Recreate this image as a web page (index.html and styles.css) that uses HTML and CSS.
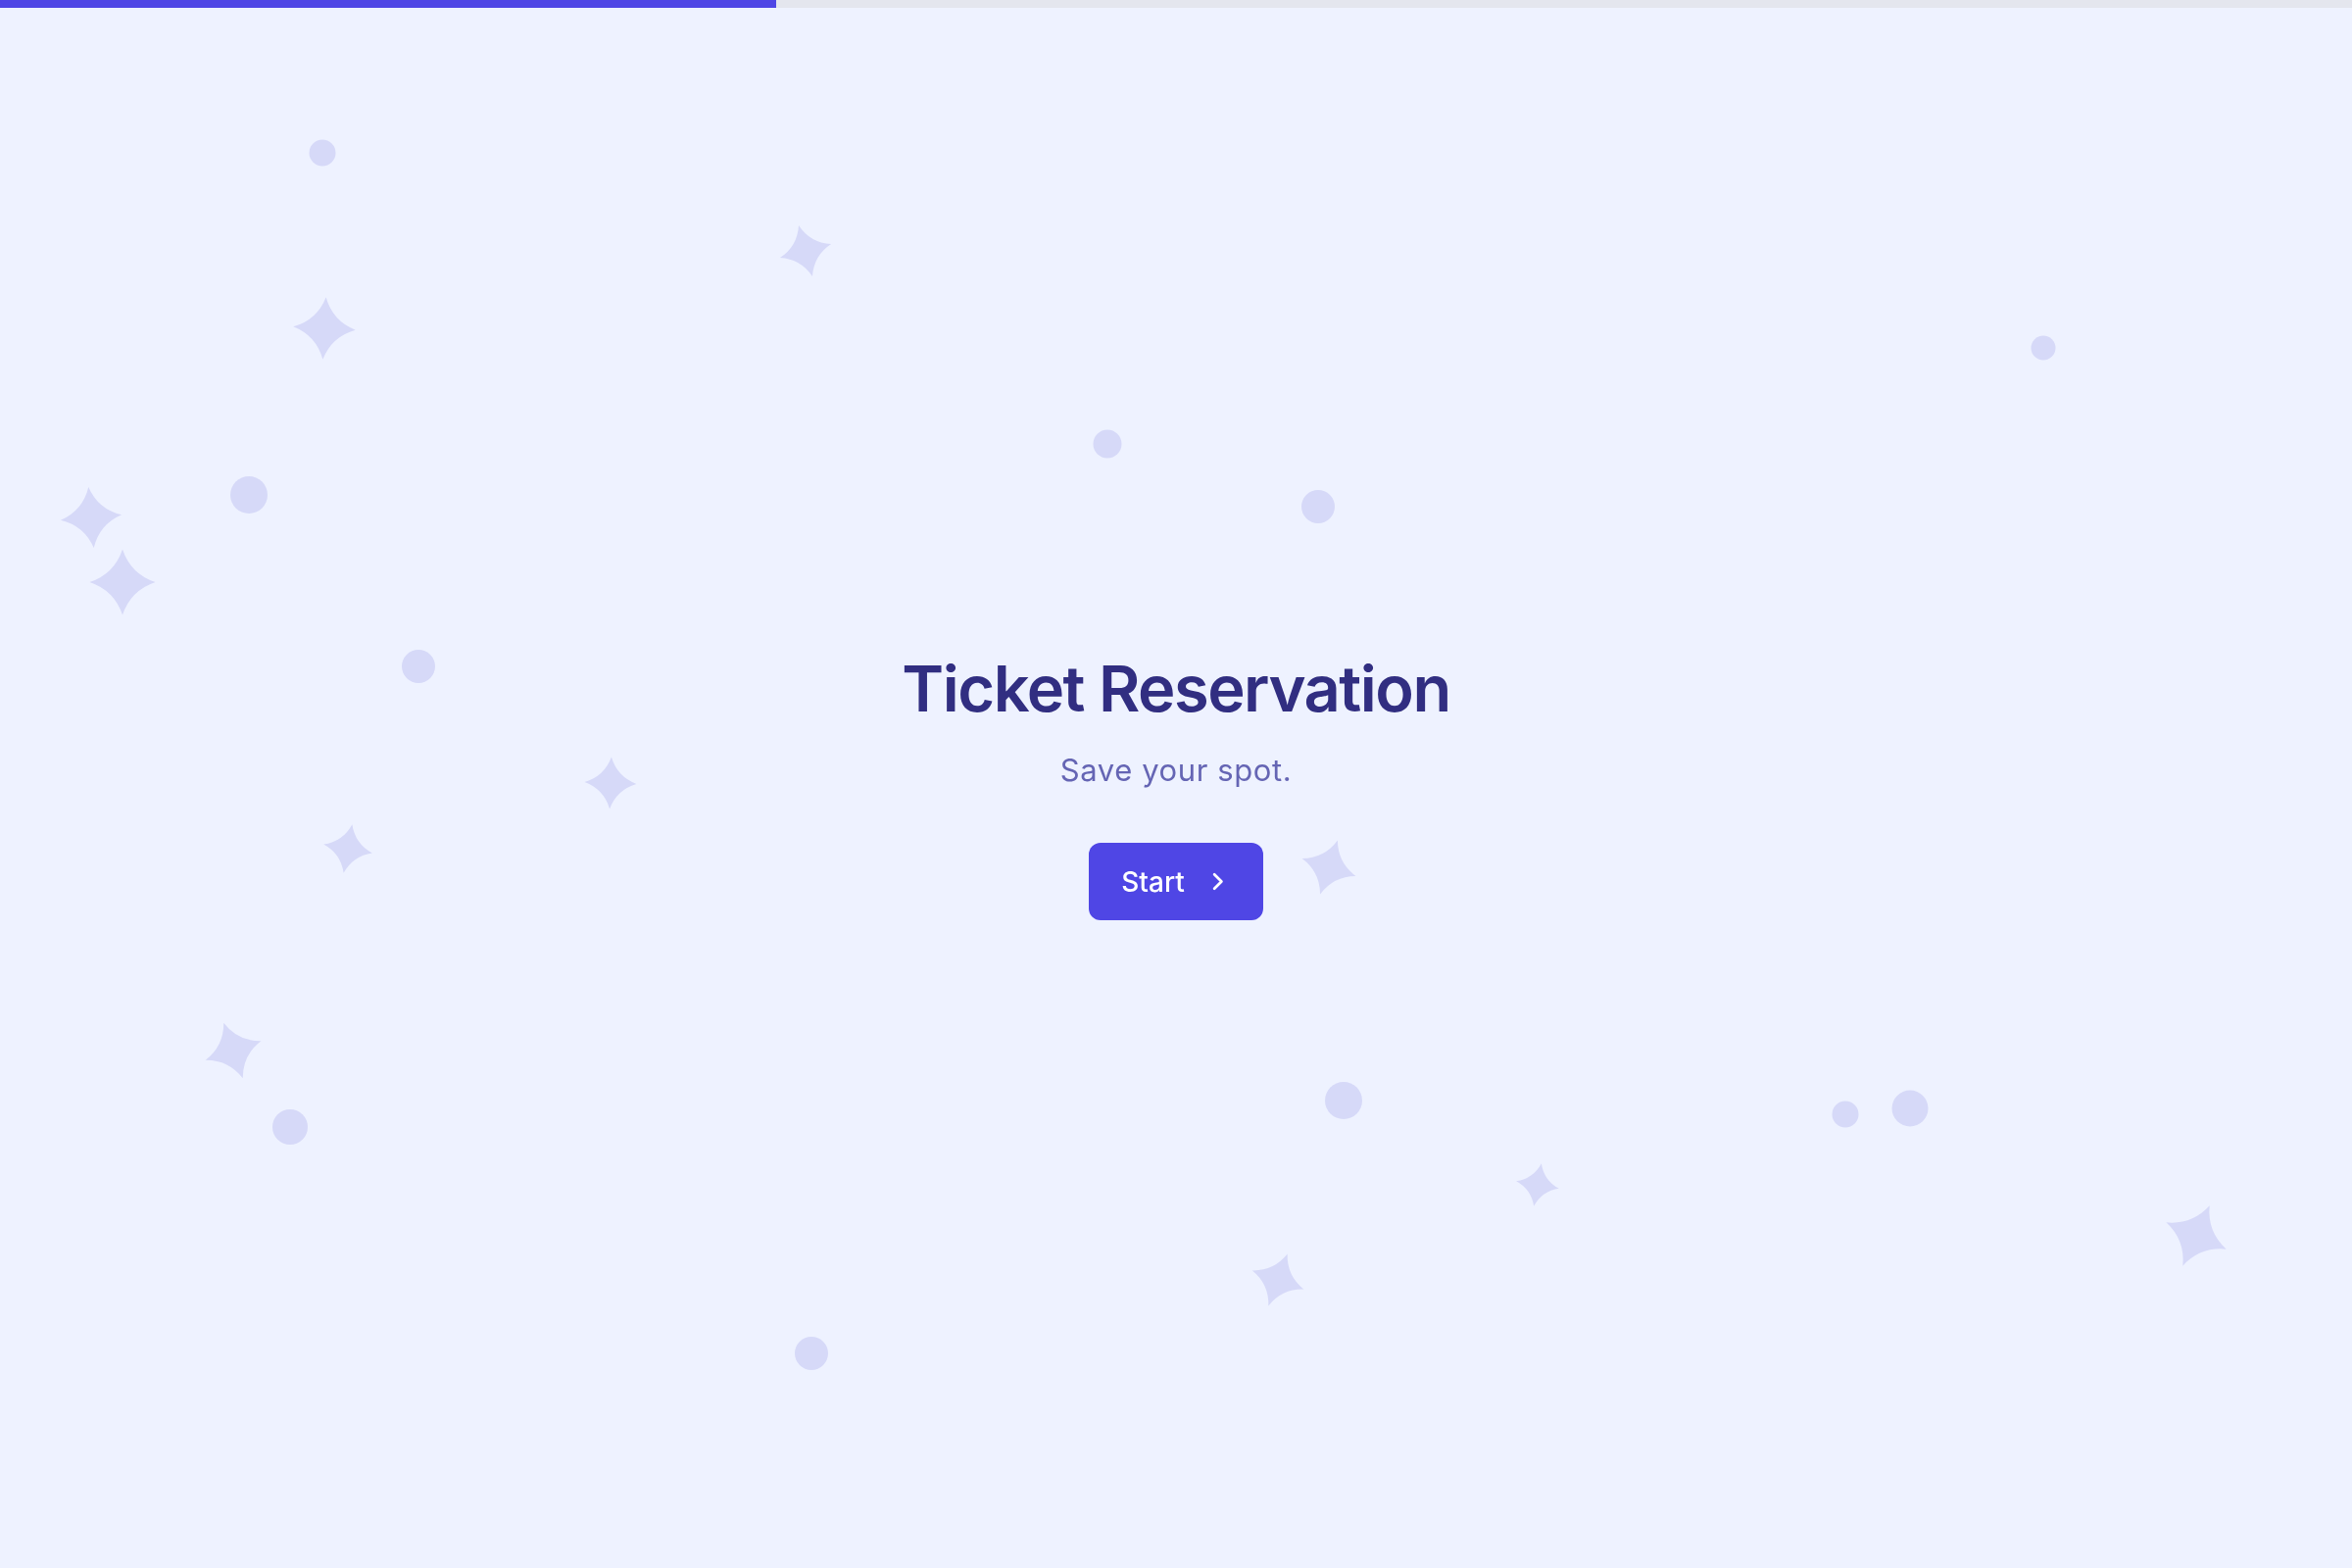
FILE: index.html
```html
<!DOCTYPE html>
<html lang="en">
  <head>
    <meta charset="UTF-8" />
    <meta name="viewport" content="width=device-width, initial-scale=1.0" />
    <title>Ticket Reservation</title>
    <link rel="stylesheet" href="styles.css">
  </head>
  <body>
    <div class="progress">
      <div class="progress-fill"></div>
    </div>

    <!-- floating sparkles and dots behind the intro -->
    <svg class="backdrop" viewBox="0 0 2400 1600" preserveAspectRatio="xMidYMid slice" aria-hidden="true">
      <defs>
        <path id="spark" d="M0 -12 Q3 -3 12 0 Q3 3 0 12 Q-3 3 -12 0 Q-3 -3 0 -12Z" />
      </defs>
      <g class="sparks">
        <use href="#spark" transform="translate(822 256) rotate(-15) scale(2.25)" />
        <use href="#spark" transform="translate(331 335) rotate(3) scale(2.65)" />
        <use href="#spark" transform="translate(93 528) rotate(-5) scale(2.6)" />
        <use href="#spark" transform="translate(125 594) scale(2.8)" />
        <use href="#spark" transform="translate(623 799) rotate(2) scale(2.2)" />
        <use href="#spark" transform="translate(355 866) rotate(10) scale(2.1)" />
        <use href="#spark" transform="translate(1356 885) rotate(18) scale(2.4)" />
        <use href="#spark" transform="translate(238 1072) rotate(-19) scale(2.5)" />
        <use href="#spark" transform="translate(1569 1209) rotate(10) scale(1.85)" />
        <use href="#spark" transform="translate(1304 1306) rotate(20) scale(2.35)" />
        <use href="#spark" transform="translate(2241 1261) rotate(24) scale(2.8)" />
      </g>
      <g class="dots">
        <circle cx="329" cy="156" r="13.5" />
        <circle cx="254" cy="505" r="19" />
        <circle cx="427" cy="680" r="17" />
        <circle cx="1130" cy="453" r="14.5" />
        <circle cx="1345" cy="517" r="17" />
        <circle cx="2085" cy="355" r="12.5" />
        <circle cx="296" cy="1150" r="18" />
        <circle cx="1371" cy="1123" r="19" />
        <circle cx="1883" cy="1137" r="13.5" />
        <circle cx="1949" cy="1131" r="18.5" />
        <circle cx="828" cy="1381" r="17" />
      </g>
    </svg>

    <main class="intro">
      <h1 class="intro-title">Ticket Reservation</h1>
      <p class="intro-sub">Save your spot.</p>
      <button class="btn-start" type="button">
        Start
        <svg class="btn-icon" viewBox="0 0 24 24" aria-hidden="true">
          <polyline points="9 5.5 15.5 12 9 18.5" />
        </svg>
      </button>
    </main>
  </body>
</html>
```

FILE: styles.css
```css
html,
body {
  height: 100%;
}

body {
  margin: 0;
  background: #eef2ff;
  font-family: "Inter", "Noto Sans", sans-serif;
  overflow: hidden;
}

.progress {
  position: relative;
  z-index: 2;
  height: 8px;
  background: #e4e6ee;
}

.progress-fill {
  width: 33%;
  height: 100%;
  background: #4f46e5;
}

.backdrop {
  position: fixed;
  inset: 0;
  width: 100%;
  height: 100%;
  z-index: 0;
  pointer-events: none;
}

.sparks use,
.dots circle {
  fill: #d6d9f8;
}

.intro {
  position: relative;
  z-index: 1;
  box-sizing: border-box;
  min-height: calc(100vh - 8px);
  padding-bottom: 6px;
  display: flex;
  flex-direction: column;
  align-items: center;
  justify-content: center;
  text-align: center;
}

.intro-title {
  margin: 0 0 23px;
  font-size: 65px;
  line-height: 80px;
  font-weight: 600;
  color: #312e81;
  letter-spacing: -1.5px;
}

.intro-sub {
  margin: 0 0 54px;
  font-size: 31px;
  line-height: 40px;
  font-weight: 400;
  color: #6565b4;
  letter-spacing: 0.6px;
}

.btn-start {
  display: flex;
  align-items: center;
  gap: 20px;
  height: 79px;
  padding: 0 33px;
  border: 0;
  border-radius: 12px;
  background: #4f46e5;
  color: #fff;
  font-family: inherit;
  font-size: 28px;
  font-weight: 500;
  cursor: pointer;
}

.btn-icon {
  width: 27px;
  height: 27px;
  fill: none;
  stroke: #fff;
  stroke-width: 2.4;
  stroke-linecap: round;
  stroke-linejoin: round;
}
```
